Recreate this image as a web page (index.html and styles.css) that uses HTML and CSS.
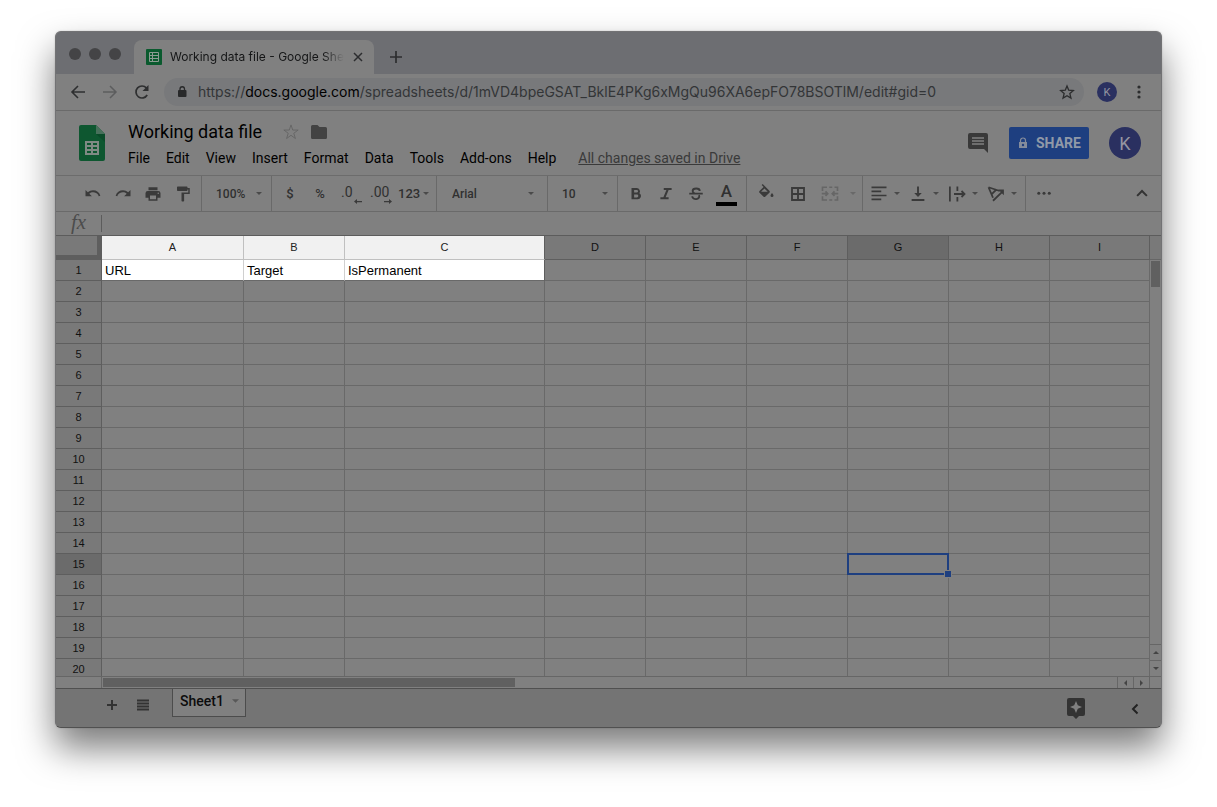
FILE: index.html
```html
<!DOCTYPE html>
<html lang="en">
<head>
<meta charset="utf-8">
<title>Working data file - Google Sheets</title>
<link rel="stylesheet" href="styles.css">
</head>
<body>
<div class="window">
  <header class="tabstrip">
    <div class="lights"><span class="light"></span><span class="light"></span><span class="light"></span></div>
    <div class="tab">
      <svg class="favicon" width="16" height="16" viewBox="0 0 16 16"><rect width="16" height="16" rx="1" fill="#0a5a2e"/><path d="M3.5 3.5h9v9h-9zM3.5 6.5h9M3.5 9.5h9M6.5 3.5v9" fill="none" stroke="#8d9b92"/></svg>
      <span class="tab-title">Working data file - Google Shee</span>
      <button class="plain" aria-label="Close tab"><svg width="12" height="12" viewBox="0 0 12 12"><path d="M2 2l8 8M10 2l-8 8" stroke="#2c2d2f" stroke-width="1.5"/></svg></button>
    </div>
    <button class="plain new-tab" aria-label="New tab"><svg width="14" height="14" viewBox="0 0 14 14"><path d="M7 1v12M1 7h12" stroke="#2c2d2f" stroke-width="1.7"/></svg></button>
  </header>

  <nav class="navbar">
    <div class="nav-buttons">
      <button class="plain" aria-label="Back"><svg width="16" height="16" viewBox="0 0 16 16"><path d="M15 8H2.5M8 2L2 8l6 6" fill="none" stroke="#2e2f30" stroke-width="1.6"/></svg></button>
      <button class="plain" aria-label="Forward"><svg width="16" height="16" viewBox="0 0 16 16"><path d="M1 8h12.500M8 2l6 6-6 6" fill="none" stroke="#5c5d5e" stroke-width="1.500"/></svg></button>
      <button class="plain" aria-label="Reload"><svg width="16" height="16" viewBox="0 0 16 16"><path d="M13.200 11A6 6 0 1 1 12.500 4" fill="none" stroke="#2e2f30" stroke-width="1.700"/><path d="M14.500 1v6h-6z" fill="#2e2f30"/></svg></button>
    </div>
    <div class="omnibox">
      <svg width="12" height="14" viewBox="0 0 12 14"><rect x="2" y="5" width="8.500" height="7" rx="1" fill="#28292a"/><path d="M4 5.500V4a2.250 2.250 0 0 1 4.500 0v1.500" fill="none" stroke="#28292a" stroke-width="1.300"/></svg>
      <span class="url">https://<b>docs.google.com</b>/spreadsheets/d/1mVD4bpeGSAT_BklE4PKg6xMgQu96XA6epFO78BSOTlM/edit#gid=0</span>
      <button class="plain" aria-label="Bookmark"><svg width="16" height="16" viewBox="0 0 24 24"><path d="M12 3l2.600 6.300 6.900.6-5.200 4.500 1.600 6.700L12 17.500l-5.900 3.600 1.600-6.700-5.200-4.500 6.900-.6z" fill="none" stroke="#2c2d2e" stroke-width="2"/></svg></button>
    </div>
    <button class="avatar avatar-small">K</button>
    <button class="plain" aria-label="Browser menu"><svg width="4" height="14" viewBox="0 0 4 14" fill="#2c2d2e"><circle cx="2" cy="2" r="1.600"/><circle cx="2" cy="7" r="1.600"/><circle cx="2" cy="12" r="1.600"/></svg></button>
  </nav>

  <section class="doc-header">
    <svg class="logo" width="26" height="36" viewBox="0 0 26 36"><path d="M2 0h15l9 9v25a2 2 0 0 1-2 2H2a2 2 0 0 1-2-2V2a2 2 0 0 1 2-2z" fill="#0e5730"/><path d="M17 0l9 9h-9z" fill="#48705b"/><path d="M17 9h9v8z" fill="#0a4b29"/><rect x="6" y="16" width="14" height="14" fill="#808a84"/><path d="M8 18h4v2H8zM14 18h4v2h-4zM8 22h4v2H8zM14 22h4v2h-4zM8 26h4v2H8zM14 26h4v2h-4z" fill="#0e5730"/></svg>
    <div class="doc-main">
      <div class="title-row">
        <h1>Working data file</h1>
        <button class="plain" aria-label="Star"><svg width="18" height="18" viewBox="0 0 24 24"><path d="M12 2.500l2.300 6.900h7.200l-5.800 4.300 2.200 7-5.900-4.300-5.900 4.300 2.200-7-5.800-4.300h7.200z" fill="none" stroke="#666" stroke-width="1.300"/></svg></button>
        <button class="plain" aria-label="Move to folder"><svg width="16" height="14" viewBox="0 0 16 14"><path d="M1.500 0h5l2 2h6A1.500 1.500 0 0 1 16 3.500v9a1.500 1.500 0 0 1-1.500 1.500h-13A1.500 1.500 0 0 1 0 12.500v-11A1.500 1.500 0 0 1 1.500 0z" fill="#434343"/></svg></button>
      </div>
      <div class="menus">
        <button class="plain">File</button><button class="plain">Edit</button><button class="plain">View</button><button class="plain">Insert</button><button class="plain">Format</button><button class="plain">Data</button><button class="plain">Tools</button><button class="plain">Add-ons</button><button class="plain">Help</button>
        <a class="saved" href="#">All changes saved in Drive</a>
      </div>
    </div>
    <button class="plain" aria-label="Comments"><svg width="20" height="20" viewBox="0 0 20 20"><path d="M2 0h16a2 2 0 0 1 2 2v18l-4-4H2a2 2 0 0 1-2-2V2a2 2 0 0 1 2-2z" fill="#393939"/><path d="M4 5h12M4 8h12M4 11h12" stroke="#808080" stroke-width="1.600"/></svg></button>
    <button class="share"><svg width="10" height="12" viewBox="0 0 10 12"><rect x="1" y="5" width="8" height="6" fill="#848c9c"/><path d="M2.500 5V3.500a2.500 2.500 0 0 1 5 0V5" fill="none" stroke="#848c9c" stroke-width="1.200"/><circle cx="5" cy="8" r="1.200" fill="#1e3d7b"/></svg>SHARE</button>
    <button class="avatar avatar-large">K</button>
  </section>

  <section class="toolbar">
    <div class="group g-history">
      <button class="tool" aria-label="Undo"><svg viewBox="0 0 24 24"><path d="M12 7c-2.600 0-5 1-6.900 2.600L2 6.500V15h8.500l-3.400-3.400A7.700 7.700 0 0 1 19.600 15l2.200-.8A10.500 10.500 0 0 0 12 7z"/></svg></button>
      <button class="tool" aria-label="Redo"><svg viewBox="0 0 24 24"><path d="M12 7c2.600 0 5 1 6.900 2.600L22 6.500V15h-8.500l3.400-3.400A7.700 7.700 0 0 0 4.400 15l-2.200-.8A10.500 10.500 0 0 1 12 7z"/></svg></button>
      <button class="tool" aria-label="Print"><svg viewBox="0 0 24 24"><path d="M19 8H5a3 3 0 0 0-3 3v6h4v4h12v-4h4v-6a3 3 0 0 0-3-3zm-3 11H8v-5h8v5zm3-7a1 1 0 1 1 0-2 1 1 0 0 1 0 2zM18 3H6v4h12V3z"/></svg></button>
      <button class="tool" aria-label="Paint format"><svg viewBox="0 0 24 24"><path d="M18 4V3a1 1 0 0 0-1-1H5a1 1 0 0 0-1 1v4a1 1 0 0 0 1 1h12a1 1 0 0 0 1-1V6h1v4H10v11a1 1 0 0 0 1 1h1.500a1 1 0 0 0 1-1v-9H21V4z"/></svg></button>
    </div>
    <div class="group g-zoom picker"><select aria-label="Zoom"><option>100%</option></select><svg class="caret" viewBox="0 0 6 3"><path d="M0 0h6L3 3z"/></svg></div>
    <div class="group g-number">
      <button class="tool label">$</button><button class="tool label">%</button>
      <button class="tool decimal">.0<svg viewBox="0 0 8 5"><path d="M0 2.500L3 0v2h5v1.200H3V5z"/></svg></button>
      <button class="tool decimal">.00<svg viewBox="0 0 8 5"><path d="M8 2.500L5 0v2H0v1.200h5V5z"/></svg></button>
      <button class="plain formats">123<svg class="caret" viewBox="0 0 6 3"><path d="M0 0h6L3 3z"/></svg></button>
    </div>
    <div class="group g-font picker"><select aria-label="Font"><option>Arial</option></select><svg class="caret" viewBox="0 0 6 3"><path d="M0 0h6L3 3z"/></svg></div>
    <div class="group g-size picker"><select aria-label="Font size"><option>10</option></select><svg class="caret" viewBox="0 0 6 3"><path d="M0 0h6L3 3z"/></svg></div>
    <div class="group g-style">
      <button class="tool" aria-label="Bold"><svg viewBox="0 0 24 24"><path d="M16.500 11.100A4.500 4.500 0 0 0 13 4H6v15h7.500a4.300 4.300 0 0 0 3-7.900zM9.500 6.500H13a1.700 1.700 0 0 1 0 3.400H9.500zm3.700 10H9.500v-3.800h3.700a1.900 1.900 0 0 1 0 3.800z"/></svg></button>
      <button class="tool" aria-label="Italic"><svg viewBox="0 0 24 24"><path d="M9 4v2.800h3.500l-4 9.400H4.500V19h11v-2.800h-4l4-9.400h4V4z"/></svg></button>
      <button class="tool" aria-label="Strikethrough"><svg viewBox="0 0 24 24"><path d="M3 11.500h18M17 8c0-4.500-9.500-4.500-9.500 0 0 1.500 1 2.500 3 3.500M16 13.500c2.500 6.500-9 7-9 1.500" fill="none" stroke="#3a3a3a" stroke-width="2.500"/></svg></button>
      <button class="tool color" aria-label="Text color"><span>A</span></button>
    </div>
    <div class="group g-cells">
      <button class="tool" aria-label="Fill color"><svg viewBox="0 0 24 24"><path d="M16.500 7.500L7.600-1.400 6.200 0l2.600 2.600-5.500 5.500a1.500 1.500 0 0 0 0 2.100l5.500 5.400a1.500 1.500 0 0 0 2.100 0l5.600-5.400a2 2 0 0 0 0-2.700zM5.500 9l4.400-4.400L14.300 9zM20 10.500s-2 2.200-2 3.500a2 2 0 0 0 4 0c0-1.300-2-3.500-2-3.500z"/></svg></button>
      <button class="tool" aria-label="Borders"><svg viewBox="0 0 24 24"><path d="M4 4h16v16H4zM12 4v16M4 12h16" fill="none" stroke="#3a3a3a" stroke-width="2.500"/></svg></button>
      <button class="tool" aria-label="Merge cells"><svg viewBox="0 0 24 24"><path d="M8 3H2v5M11 3h4M18 3h4v5M8 20H2v-5M11 20h4M18 20h4v-5M1 11.500h8M23 11.500h-8M6 8.500l3 3-3 3M18 8.500l-3 3 3 3" fill="none" stroke="#666" stroke-width="2.200"/></svg></button>
      <svg class="caret faded" viewBox="0 0 6 3"><path d="M0 0h6L3 3z"/></svg>
    </div>
    <div class="group g-align">
      <button class="plain drop" aria-label="Horizontal align"><svg class="icon" viewBox="0 0 24 24"><path d="M2 3.300h20M2 8.600h13M2 14h20M2 19.300h13" stroke="#3a3a3a" stroke-width="2.300"/></svg><svg class="caret" viewBox="0 0 6 3"><path d="M0 0h6L3 3z"/></svg></button>
      <button class="plain drop" aria-label="Vertical align"><svg class="icon" viewBox="0 0 24 24"><path d="M12 2v9M3.500 20h17" stroke="#3a3a3a" stroke-width="2.500"/><path d="M7 10.500h10L12 16z"/></svg><svg class="caret" viewBox="0 0 6 3"><path d="M0 0h6L3 3z"/></svg></button>
      <button class="plain drop" aria-label="Text wrapping"><svg class="icon" viewBox="0 0 24 24"><path d="M2.500 2v20M12.500 2v6M12.500 16v6M8 12h14M18 8l4 4-4 4" fill="none" stroke="#3a3a3a" stroke-width="2.400"/></svg><svg class="caret" viewBox="0 0 6 3"><path d="M0 0h6L3 3z"/></svg></button>
      <button class="plain drop" aria-label="Text rotation"><svg class="icon" viewBox="0 0 24 24"><path d="M2 3l15 5M2 3l6 14M6 12.500L12.500 6M8 21L21 8.500" fill="none" stroke="#3a3a3a" stroke-width="2.400"/><path d="M15 6h7.500v7.500z"/></svg><svg class="caret" viewBox="0 0 6 3"><path d="M0 0h6L3 3z"/></svg></button>
    </div>
    <div class="group g-more">
      <button class="tool" aria-label="More"><svg viewBox="0 0 24 24"><circle cx="5" cy="11" r="2"/><circle cx="12" cy="11" r="2"/><circle cx="19" cy="11" r="2"/></svg></button>
      <button class="tool" aria-label="Hide the menus"><svg viewBox="0 0 24 24"><path d="M5.500 14.500L12 8l6.500 6.500" fill="none" stroke="#333" stroke-width="2.700"/></svg></button>
    </div>
  </section>

  <div class="formula"><label for="fx">fx</label><input id="fx" type="text"></div>

  <main class="sheet">
    <div class="grid-area">
      <table class="grid">
        <colgroup><col class="c-num"><col class="c-a"><col class="c-b"><col class="c-c"><col class="c-d"><col class="c-d"><col class="c-d"><col class="c-d"><col class="c-d"><col></colgroup>
        <thead><tr><th class="corner"></th><th class="lit">A</th><th class="lit">B</th><th class="lit lit-end">C</th><th>D</th><th>E</th><th>F</th><th class="active">G</th><th>H</th><th>I</th></tr></thead>
        <tbody id="rows">
          <tr><th>1</th><td class="lit">URL</td><td class="lit">Target</td><td class="lit lit-end">IsPermanent</td><td></td><td></td><td></td><td></td><td></td><td></td></tr>
        </tbody>
      </table>
    </div>
    <div class="vscroll">
      <div class="vscroll-head"></div>
      <div class="vthumb"></div>
      <button class="arrow" aria-label="Scroll up"><svg width="6" height="3" viewBox="0 0 6 3"><path d="M0 3h6L3 0z"/></svg></button>
      <button class="arrow" aria-label="Scroll down"><svg width="6" height="3" viewBox="0 0 6 3"><path d="M0 0h6L3 3z"/></svg></button>
    </div>
  </main>
  <div class="hscroll">
    <div class="hscroll-head"></div>
    <div class="htrack"><div class="hthumb"></div></div>
    <button class="harrow" aria-label="Scroll left"><svg width="3" height="6" viewBox="0 0 3 6"><path d="M3 0v6L0 3z"/></svg></button>
    <button class="harrow" aria-label="Scroll right"><svg width="3" height="6" viewBox="0 0 3 6"><path d="M0 0v6l3-3z"/></svg></button>
    <div class="hcorner"></div>
  </div>

  <footer class="sheetbar">
    <button class="plain" aria-label="Add sheet"><svg width="12" height="12" viewBox="0 0 12 12"><path d="M6 1v10M1 6h10" stroke="#333" stroke-width="2"/></svg></button>
    <button class="plain" aria-label="All sheets"><svg width="12" height="12" viewBox="0 0 12 12"><path d="M0 1.500h12M0 4.500h12M0 7.500h12M0 10.500h12" stroke="#333" stroke-width="2"/></svg></button>
    <button class="sheet-tab">Sheet1<svg width="7" height="4" viewBox="0 0 6 3"><path d="M0 0h6L3 3z" fill="#585858"/></svg></button>
    <div class="bar-end">
      <button class="plain" aria-label="Explore"><svg width="18" height="21" viewBox="0 0 18 21"><path d="M2 0h14a2 2 0 0 1 2 2v14a2 2 0 0 1-2 2h-4l-3 3-3-3H2a2 2 0 0 1-2-2V2a2 2 0 0 1 2-2z" fill="#333"/><path d="M9 3l1.800 4.200L15 9l-4.200 1.800L9 15l-1.800-4.200L3 9l4.200-1.800z" fill="#808080"/></svg></button>
      <button class="plain" aria-label="Show side panel"><svg width="8" height="12" viewBox="0 0 8 12"><path d="M6.500 1.500L2 6l4.500 4.500" fill="none" stroke="#222" stroke-width="2"/></svg></button>
    </div>
  </footer>
</div>
<script src="grid.js"></script>
</body>
</html>
```
FILE: styles.css
```css
* { box-sizing: border-box; }
body { margin: 0; padding: 31px 55px 79px; background: #fff; font-family: Roboto, "Liberation Sans", sans-serif; color: #000; }
button, input, select { font: inherit; color: inherit; margin: 0; }
svg { display: block; flex: none; }
.plain, .tool { border: 0; padding: 0; background: none; display: flex; align-items: center; }
.window { border: 1px solid #727274; border-bottom-color: #505050; border-radius: 6px; overflow: hidden; background: #808080; box-shadow: 0 20px 36px rgba(0,0,0,.52), 0 0 2px rgba(0,0,0,.2); }

.tabstrip { display: flex; height: 42px; background: #6d6e72; }
.lights { display: flex; gap: 8px; padding: 16px 13px 0; width: 78px; }
.light { width: 12px; height: 12px; border-radius: 50%; background: #444446; flex: none; }
.tab { display: flex; align-items: center; gap: 8px; width: 240px; margin-top: 8px; padding: 0 10px 0 12px; border-radius: 8px 8px 0 0; background: #808080; }
.tab-title { flex: 1; min-width: 0; white-space: nowrap; font: 12px/16px Inter, sans-serif; color: transparent; background: linear-gradient(90deg, #141516 88%, #808080) text; }
.new-tab { margin: 8px 0 0 15px; }

.navbar { display: flex; align-items: center; height: 37px; padding-right: 20px; border-bottom: 1px solid #6a6a6a; }
.nav-buttons { display: flex; gap: 16px; padding-left: 14px; width: 108px; }
.omnibox { flex: 1; min-width: 0; display: flex; align-items: center; height: 28px; padding: 0 9px 0 12px; border-radius: 14px; background: #78797b; }
.url { flex: 1; min-width: 0; overflow: hidden; white-space: nowrap; padding-left: 10px; font: 14px/20px Inter, sans-serif; color: #333537; }
.url b { font-weight: 400; color: #000; }
.avatar { border: 0; padding: 0; border-radius: 50%; background: #2a3060; color: #9495a0; }
.avatar-small { width: 20px; height: 20px; margin: 0 20px 0 13px; font-size: 11px; }
.avatar-large { width: 32px; height: 32px; font-size: 18px; margin-left: 20px; }

.doc-header { display: flex; align-items: center; height: 65px; padding: 0 20px 0 23px; border-bottom: 1px solid #6c6c6c; }
.doc-main { flex: 1; margin-left: 23px; padding-top: 2px; }
.title-row { display: flex; align-items: center; height: 24px; }
.title-row h1 { margin: 0 20px 0 0; font-size: 18px; line-height: 24px; font-weight: 400; }
.title-row button + button { margin-left: 11px; }
.menus { display: flex; gap: 16px; margin-top: 4px; font-size: 14px; line-height: 20px; white-space: nowrap; }
.saved { margin-left: 6px; color: #3a3a3a; }
.share { display: flex; align-items: center; gap: 8px; height: 32px; width: 80px; margin-left: 21px; padding: 0 0 0 9px; border: 0; border-radius: 2px; background: #1e3f80; color: #9099a8; font-size: 14px; font-weight: 700; }

.toolbar { display: flex; height: 36px; border-bottom: 1px solid #6a6a6a; color: #303030; fill: #3a3a3a; font-size: 13px; font-weight: 500; }
.group { display: flex; align-items: center; gap: 6px; border-right: 1px solid #696969; flex: none; }
.tool { width: 24px; height: 24px; justify-content: center; }
.tool svg, .icon { width: 18px; height: 18px; overflow: visible; }
.caret { width: 6px; height: 3px; fill: #4a4a4a; }
.faded { fill: #696969; }
.g-history { width: 146px; padding-left: 25px; }
.g-zoom { width: 70px; }
.g-number { width: 165px; padding-left: 6px; }
.g-font { width: 111px; }
.g-size { width: 70px; }
.g-style { width: 129px; padding-left: 6px; }
.g-cells { width: 116px; padding-left: 7px; gap: 8px; }
.g-align { width: 163px; padding-left: 7px; gap: 9px; }
.g-more { flex: 1; justify-content: space-between; padding: 0 7px 0 6px; border: 0; }
.picker { justify-content: space-between; padding: 0 9px 0 14px; }
.picker select { appearance: none; flex: 1; min-width: 0; border: 0; padding: 0; background: none; font-size: 12px; }
.g-font { padding-left: 15px; padding-right: 13px; }
.drop { gap: 6px; }
.decimal { flex-direction: column; align-items: flex-start; padding-left: 3px; font-size: 14px; font-weight: 400; line-height: 16px; }
.decimal + .decimal { padding-left: 2px; }
.tool.decimal svg { width: 8px; height: 5px; align-self: flex-end; margin-top: -1px; }
.formats { gap: 3px; }
.tool.color { flex-direction: column; justify-content: flex-start; width: 21px; margin-left: 2px; border-bottom: 4px solid #000; font-size: 17px; line-height: 18px; }

.formula { display: flex; align-items: center; height: 24px; border-bottom: 1px solid #5c5c5c; }
.formula label { width: 45px; height: 24px; text-align: center; font: italic 21px/20px "Liberation Serif", serif; color: #4c4c4c; }
.formula input { flex: 1; height: 17px; border: 0; border-left: 1px solid #5c5c5c; background: none; outline: 0; }

.sheet { display: flex; height: 441px; border-bottom: 1px solid #666; }
.grid-area { flex: 1; min-width: 0; overflow: hidden; }
.grid { width: 100%; table-layout: fixed; border-collapse: separate; border-spacing: 0; font-family: "Liberation Sans", sans-serif; }
.c-num { width: 46px; }
.c-a { width: 142px; }
.c-b, .c-d { width: 101px; }
.c-c { width: 200px; }
.grid th, .grid td { height: 21px; padding: 0 3px; border: solid #696969; border-width: 0 1px 1px 0; font-size: 13px; line-height: 16px; text-align: left; white-space: nowrap; }
.grid td { padding-top: 1px; }
.grid th { background: #797979; border-color: #5e5e5e; font-size: 11px; font-weight: 400; text-align: center; color: #111; }
.grid thead th { height: 24px; padding-bottom: 1px; }
.grid td.lit { background: #fff; border-right-color: #d0d0d0; }
.grid thead th.lit { background: #f1f1f1; border-color: #c0c0c0; color: #222; }
.grid td.lit-end, .grid thead th.lit-end { border-right-color: #5e5e5e; }
.grid thead th.corner { border-width: 0 5px 5px 0; }
.grid th.active { background: #6b6b6b; }
.grid td.selected { position: relative; }
.selected::before { content: ""; position: absolute; inset: -1px; border: 2px solid #1e3f80; }
.selected::after { content: ""; position: absolute; right: -3px; bottom: -3px; width: 6px; height: 6px; background: #1e3f80; outline: 1px solid #808080; }

.vscroll { width: 11px; display: flex; flex-direction: column; }
.vscroll-head { height: 24px; background: #797979; border-bottom: 1px solid #666; }
.vthumb { height: 26px; margin: 1px 1px auto; background: #606060; }
.arrow, .harrow { display: flex; align-items: center; justify-content: center; padding: 0; border: 0 solid #666; background: none; fill: #444; }
.arrow { height: 16px; border-top-width: 1px; }
.hscroll { display: flex; height: 12px; border-bottom: 1px solid #505050; }
.hscroll-head { width: 46px; border-right: 1px solid #666; }
.htrack { flex: 1; padding: 1px; }
.hthumb { width: 41%; max-width: 412px; height: 9px; background: #606060; }
.harrow { width: 16px; border-left-width: 1px; }
.hcorner { width: 12px; border-left: 1px solid #666; }

.sheetbar { display: flex; align-items: flex-start; height: 38px; padding: 0 22px 0 50px; background: #747474; }
.sheetbar > .plain { margin: 10px 19px 0 0; }
.sheetbar .sheet-tab { display: flex; align-items: center; gap: 8px; height: 28px; margin-left: 4px; padding: 0 6px 3px 7px; border: 1px solid #4c4c4c; border-top: 0; background: #808080; font-size: 14px; font-weight: 500; color: #0c0c0c; }
.bar-end { display: flex; align-items: center; gap: 46px; margin: 9px 0 0 auto; }
```
FILE: grid.js
```js
const body = document.getElementById('rows');
for (let r = 2; r <= 20; r++) {
  const tr = document.createElement('tr');
  const th = document.createElement('th');
  th.textContent = r;
  if (r === 15) th.className = 'active';
  tr.append(th);
  for (let c = 0; c < 9; c++) {
    const td = document.createElement('td');
    if (r === 15 && c === 6) td.className = 'selected';
    tr.append(td);
  }
  body.append(tr);
}
```
